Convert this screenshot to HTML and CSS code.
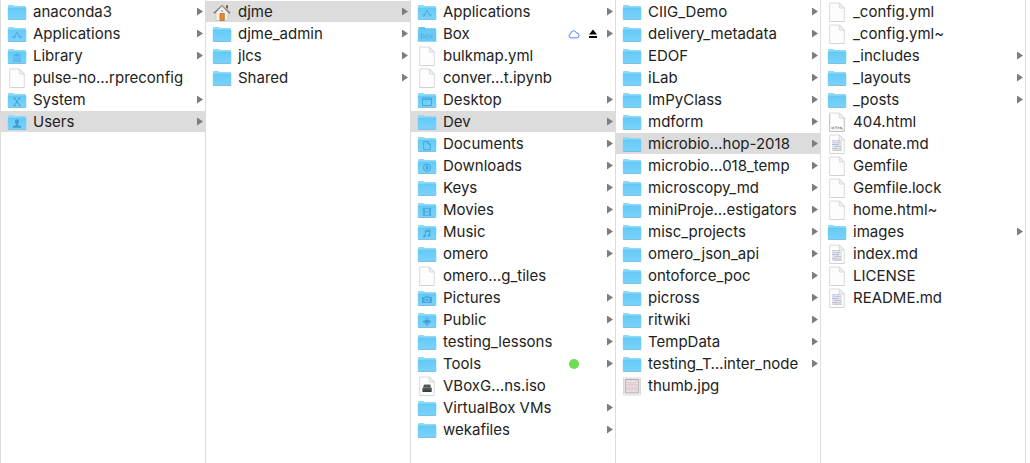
FILE: index.html
```html
<!DOCTYPE html>
<html lang="en">
<head>
<meta charset="utf-8">
<title>microbiology-workshop-2018</title>
<link rel="stylesheet" href="styles.css">
</head>
<body>
<svg class="sprite" aria-hidden="true">
  <defs>
    <linearGradient id="front" x1="0" y1="0" x2="0" y2="1">
      <stop offset="0" stop-color="#66caf8"/><stop offset="1" stop-color="#7ad2fb"/>
    </linearGradient>
    <linearGradient id="roof" x1="0" y1="0" x2="0" y2="1">
      <stop offset="0" stop-color="#a9a39c"/><stop offset="1" stop-color="#6f6a64"/>
    </linearGradient>
    <symbol id="folder" viewBox="0 0 20 20">
      <path d="M1 17.500V4q0-1 1-1h4.200q.6 0 1 .5l.6.6H18q1 0 1 1v12.400z" fill="#8cdaf7"/>
      <path d="M.8 6h18.500v10.700q0 .8-.8.800H1.600q-.8 0-.8-.8z" fill="url(#front)"/>
      <path d="M1 6h18" stroke="#5bbdea" stroke-width=".5"/>
      <path d="M1.200 17.500h17.700" stroke="#6bb3d5" stroke-width=".7"/>
    </symbol>
    <symbol id="file" viewBox="0 0 20 20">
      <path d="M2.700 1h9.800L17.300 6v13q0 .6-.6.600H3.200q-.6 0-.6-.6z" fill="#fdfdfd" stroke="#d2d2d2" stroke-width=".8"/>
      <path d="M12.300 1v4.400q0 .7.700.7h4.300z" fill="#f1f1f1" stroke="#cfcfcf" stroke-width=".7"/>
      <path d="M2.600 19.700h14.700" stroke="#c4c4c4" stroke-width=".6"/>
    </symbol>
    <symbol id="apps" viewBox="0 0 20 20"><use href="#folder"/>
      <path d="M6.700 14.800L10 8.200l3.300 6.600M5 12.800h4m3 0h3" fill="none" stroke="#4aace0" stroke-width="1"/>
    </symbol>
    <symbol id="library" viewBox="0 0 20 20"><use href="#folder"/>
      <path d="M5.500 9.700L10 7.500l4.500 2.200zM6 14.600h8v.9H6z" fill="#4aace0"/>
      <path d="M7 10.200v4m2-4v4m2-4v4m2-4v4" stroke="#4aace0" stroke-width=".8"/>
    </symbol>
    <symbol id="system" viewBox="0 0 20 20"><use href="#folder"/>
      <path d="M7.300 8l5.400 7.500M12.700 8l-5.400 7.500M6.400 8h2.200m3 0h2M6.400 15.500h2.200m3 0h2" fill="none" stroke="#3c9fd2" stroke-width="1"/>
    </symbol>
    <symbol id="users" viewBox="0 0 20 20"><use href="#folder"/>
      <path d="M10 7.300c2.800 0 2.600 3.400 1 4.700v1l3.300 1.200v1.500H5.700v-1.500L9 13v-1c-1.600-1.300-1.800-4.700 1-4.700z" fill="#3c9fd2"/>
    </symbol>
    <symbol id="box" viewBox="0 0 20 20">
      <path d="M1.500 3h6l1 1.300h10.300v13.200H1z" fill="#62c4f0"/>
      <path d="M.8 5.500h18.500v12H.8z" fill="#69c9f5"/>
      <g fill="none" stroke="#49b0e4" stroke-width=".8"><path d="M4.500 8.500v6"/><circle cx="6" cy="12.500" r="1.600"/><circle cx="10.200" cy="12.500" r="1.600"/><path d="M13 11l2.800 3.300m0-3.300L13 14.300"/></g>
    </symbol>
    <symbol id="desktop" viewBox="0 0 20 20"><use href="#folder"/>
      <path d="M5.500 8h9v7.500h-9zM5.500 9.300h9" fill="none" stroke="#3fa3d8" stroke-width=".9"/>
    </symbol>
    <symbol id="documents" viewBox="0 0 20 20"><use href="#folder"/>
      <path d="M6.700 7.500h4L13.300 10v5.700H6.700zM10.600 7.500V10h2.700" fill="none" stroke="#3fa3d8" stroke-width=".9"/>
    </symbol>
    <symbol id="downloads" viewBox="0 0 20 20"><use href="#folder"/>
      <circle cx="10" cy="11.700" r="3.600" fill="none" stroke="#3fa3d8" stroke-width="1"/>
      <path d="M9.200 9.500h1.600v2h1.400L10 14l-2.200-2.500h1.400z" fill="#3fa3d8"/>
    </symbol>
    <symbol id="movies" viewBox="0 0 20 20"><use href="#folder"/>
      <path d="M6.500 8v7.700M13.500 8v7.700" stroke="#3fa3d8" stroke-width="1.500" stroke-dasharray="1.200 .5"/>
      <path d="M7.500 8.400h5v6.900h-5zM7.500 11.800h5" fill="none" stroke="#3fa3d8" stroke-width=".8"/>
    </symbol>
    <symbol id="music" viewBox="0 0 20 20"><use href="#folder"/>
      <path d="M8.300 14V8.800l4.500-1v5.300M8.300 10l4.500-1" fill="none" stroke="#3c9fd2" stroke-width=".9"/>
      <ellipse cx="7.400" cy="14.300" rx="1.400" ry="1.100" fill="#3c9fd2"/><ellipse cx="11.900" cy="13.400" rx="1.400" ry="1.100" fill="#3c9fd2"/>
    </symbol>
    <symbol id="pictures" viewBox="0 0 20 20"><use href="#folder"/>
      <path fill-rule="evenodd" d="M5 9h2.500l.9-1.300h3.200l.9 1.300H15v6H5zM10 9.300a2.500 2.500 0 100 5 2.500 2.500 0 000-5z" fill="#49a9dc"/>
      <circle cx="10" cy="11.800" r="1.500" fill="#49a9dc"/>
    </symbol>
    <symbol id="public" viewBox="0 0 20 20"><use href="#folder"/>
      <path d="M10 7.400l1.900 1.900H8.100zM10 16l1.900-1.900H8.100zM5.700 11.700l1.900-1.900v3.800zM14.300 11.700l-1.900-1.900v3.800zM8 9.900h4v3.600H8z" fill="#429fd2"/>
    </symbol>
    <symbol id="home" viewBox="0 0 20 20">
      <path d="M14 3.200h2v4l-2-2z" fill="#8c5138"/>
      <path d="M4 10l6-6.500 6 6.500v8.500H4z" fill="#f1eee7" stroke="#c5bfb5" stroke-width=".5"/>
      <path d="M8 11.500h4.300v7H8z" fill="#e7892c" stroke="#9c5c22" stroke-width=".6"/>
      <path d="M9.200 8.300h1.700v1.500H9.200z" fill="#8b9fae"/>
      <path d="M2 11.300l8-7.800 8 7.800" fill="none" stroke="url(#roof)" stroke-width="1.600"/>
    </symbol>
    <symbol id="disk" viewBox="0 0 20 20"><use href="#file"/>
      <path d="M7 8.300h6.200l1.300 4H5.600z" fill="#9a9a9a"/><path d="M7.200 9h5.800l.8 2.500H6.400z" fill="#555"/>
      <rect x="5.400" y="12" width="9.300" height="4" rx=".6" fill="#3b4145"/><path d="M6 13h8" stroke="#718078" stroke-width=".7"/>
    </symbol>
    <symbol id="html" viewBox="0 0 20 20"><use href="#file"/>
      <path d="M2.600 2v17.400h14.700V6" fill="none" stroke="#b1b1b1" stroke-width=".6"/>
      <g fill="none" stroke="#777" stroke-width=".6"><path d="M5 14.700v2.600m1.800-2.600v2.600M5 16h1.800M7.800 14.900h2.400m-1.200 0v2.400M11 17.300v-2.400l1.200 1.400 1.200-1.400v2.400M14.500 14.700v2.400H16"/></g>
    </symbol>
    <symbol id="markdown" viewBox="0 0 20 20"><use href="#file"/>
      <path d="M5 6h10v11H5z" fill="#e5e6eb"/>
      <g fill="none" stroke-width="1"><path d="M5.500 6.600h3m1.500 0h3" stroke="#9ad3e8"/><path d="M5.500 8.600h2m1 0h5" stroke="#e3b3d2"/><path d="M5 10.600h7" stroke="#a3c2e4"/><path d="M7 12.500h7.500" stroke="#c6c6d3"/><path d="M5 14.400h6m1 0h2" stroke="#c8c1cd"/><path d="M6 16.200h8.500" stroke="#c0c1cc"/></g>
    </symbol>
    <symbol id="photo" viewBox="0 0 20 20">
      <path d="M1.600 2h16.800v17H1.600z" fill="#fff" stroke="#c9c9c9" stroke-width=".8"/>
      <path d="M3.200 3.500h13.600v13.500H3.200z" fill="#e9e2e2" stroke="#9a9a9a" stroke-width=".8"/>
      <path d="M5 5.500v9.500m2-9v8m3-8v9m2-9v8m3-8.500v9" stroke="#dfa9ca" stroke-width=".9" stroke-dasharray="1.400 1.100"/>
      <path d="M8.500 4v12.500m5-12.500v12.500M3.500 8.500h13m-13 4h13" stroke="#cec7c7" stroke-width=".4"/>
    </symbol>
    <symbol id="cloud" viewBox="0 0 12 12">
      <path d="M3 9.800Q1 9.600 1 7.800 1 6.300 2.700 6 2.900 2.800 5.500 2.800q2 0 2.700 2 2.800 0 2.800 2.800 0 2.200-2 2.200z" fill="#fff" stroke="#4a86f5" stroke-width="1"/>
    </symbol>
    <symbol id="eject" viewBox="0 0 10 10"><path d="M5 .5l4 5H1zM1 7h8v2H1z"/></symbol>
  </defs>
</svg>
<main class="browser">
  <ul class="column" aria-label="Macintosh HD">
    <li><a class="row folder" href="#"><svg class="icon"><use href="#folder"/></svg><span class="name">anaconda3</span></a></li>
    <li><a class="row folder" href="#"><svg class="icon"><use href="#apps"/></svg><span class="name">Applications</span></a></li>
    <li><a class="row folder" href="#"><svg class="icon"><use href="#library"/></svg><span class="name">Library</span></a></li>
    <li><a class="row" href="#"><svg class="icon"><use href="#file"/></svg><span class="name">pulse-no…rpreconfig</span></a></li>
    <li><a class="row folder" href="#"><svg class="icon"><use href="#system"/></svg><span class="name">System</span></a></li>
    <li><a class="row folder selected" href="#"><svg class="icon"><use href="#users"/></svg><span class="name">Users</span></a></li>
  </ul>
  <ul class="column" aria-label="Users">
    <li><a class="row folder selected" href="#"><svg class="icon"><use href="#home"/></svg><span class="name">djme</span></a></li>
    <li><a class="row folder" href="#"><svg class="icon"><use href="#folder"/></svg><span class="name">djme_admin</span></a></li>
    <li><a class="row folder" href="#"><svg class="icon"><use href="#folder"/></svg><span class="name">jlcs</span></a></li>
    <li><a class="row folder" href="#"><svg class="icon"><use href="#folder"/></svg><span class="name">Shared</span></a></li>
  </ul>
  <ul class="column" aria-label="djme">
    <li><a class="row folder" href="#"><svg class="icon"><use href="#apps"/></svg><span class="name">Applications</span></a></li>
    <li><a class="row folder" href="#"><svg class="icon"><use href="#box"/></svg><span class="name">Box</span><span class="status"><svg class="cloud"><use href="#cloud"/></svg><svg class="eject"><use href="#eject"/></svg></span></a></li>
    <li><a class="row" href="#"><svg class="icon"><use href="#file"/></svg><span class="name">bulkmap.yml</span></a></li>
    <li><a class="row" href="#"><svg class="icon"><use href="#file"/></svg><span class="name">conver…t.ipynb</span></a></li>
    <li><a class="row folder" href="#"><svg class="icon"><use href="#desktop"/></svg><span class="name">Desktop</span></a></li>
    <li><a class="row folder selected" href="#"><svg class="icon"><use href="#folder"/></svg><span class="name">Dev</span></a></li>
    <li><a class="row folder" href="#"><svg class="icon"><use href="#documents"/></svg><span class="name">Documents</span></a></li>
    <li><a class="row folder" href="#"><svg class="icon"><use href="#downloads"/></svg><span class="name">Downloads</span></a></li>
    <li><a class="row folder" href="#"><svg class="icon"><use href="#folder"/></svg><span class="name">Keys</span></a></li>
    <li><a class="row folder" href="#"><svg class="icon"><use href="#movies"/></svg><span class="name">Movies</span></a></li>
    <li><a class="row folder" href="#"><svg class="icon"><use href="#music"/></svg><span class="name">Music</span></a></li>
    <li><a class="row folder" href="#"><svg class="icon"><use href="#folder"/></svg><span class="name">omero</span></a></li>
    <li><a class="row" href="#"><svg class="icon"><use href="#file"/></svg><span class="name">omero…g_tiles</span></a></li>
    <li><a class="row folder" href="#"><svg class="icon"><use href="#pictures"/></svg><span class="name">Pictures</span></a></li>
    <li><a class="row folder" href="#"><svg class="icon"><use href="#public"/></svg><span class="name">Public</span></a></li>
    <li><a class="row folder" href="#"><svg class="icon"><use href="#folder"/></svg><span class="name">testing_lessons</span></a></li>
    <li><a class="row folder" href="#"><svg class="icon"><use href="#folder"/></svg><span class="name">Tools</span><span class="status"><i class="tag"></i></span></a></li>
    <li><a class="row" href="#"><svg class="icon"><use href="#disk"/></svg><span class="name">VBoxG…ns.iso</span></a></li>
    <li><a class="row folder" href="#"><svg class="icon"><use href="#folder"/></svg><span class="name">VirtualBox VMs</span></a></li>
    <li><a class="row folder" href="#"><svg class="icon"><use href="#folder"/></svg><span class="name">wekafiles</span></a></li>
  </ul>
  <ul class="column" aria-label="Dev">
    <li><a class="row folder" href="#"><svg class="icon"><use href="#folder"/></svg><span class="name">CIIG_Demo</span></a></li>
    <li><a class="row folder" href="#"><svg class="icon"><use href="#folder"/></svg><span class="name">delivery_metadata</span></a></li>
    <li><a class="row folder" href="#"><svg class="icon"><use href="#folder"/></svg><span class="name">EDOF</span></a></li>
    <li><a class="row folder" href="#"><svg class="icon"><use href="#folder"/></svg><span class="name">iLab</span></a></li>
    <li><a class="row folder" href="#"><svg class="icon"><use href="#folder"/></svg><span class="name">ImPyClass</span></a></li>
    <li><a class="row folder" href="#"><svg class="icon"><use href="#folder"/></svg><span class="name">mdform</span></a></li>
    <li><a class="row folder selected" href="#"><svg class="icon"><use href="#folder"/></svg><span class="name">microbio…hop-2018</span></a></li>
    <li><a class="row folder" href="#"><svg class="icon"><use href="#folder"/></svg><span class="name">microbio…018_temp</span></a></li>
    <li><a class="row folder" href="#"><svg class="icon"><use href="#folder"/></svg><span class="name">microscopy_md</span></a></li>
    <li><a class="row folder" href="#"><svg class="icon"><use href="#folder"/></svg><span class="name">miniProje…estigators</span></a></li>
    <li><a class="row folder" href="#"><svg class="icon"><use href="#folder"/></svg><span class="name">misc_projects</span></a></li>
    <li><a class="row folder" href="#"><svg class="icon"><use href="#folder"/></svg><span class="name">omero_json_api</span></a></li>
    <li><a class="row folder" href="#"><svg class="icon"><use href="#folder"/></svg><span class="name">ontoforce_poc</span></a></li>
    <li><a class="row folder" href="#"><svg class="icon"><use href="#folder"/></svg><span class="name">picross</span></a></li>
    <li><a class="row folder" href="#"><svg class="icon"><use href="#folder"/></svg><span class="name">ritwiki</span></a></li>
    <li><a class="row folder" href="#"><svg class="icon"><use href="#folder"/></svg><span class="name">TempData</span></a></li>
    <li><a class="row folder" href="#"><svg class="icon"><use href="#folder"/></svg><span class="name">testing_T…inter_node</span></a></li>
    <li><a class="row" href="#"><svg class="icon"><use href="#photo"/></svg><span class="name">thumb.jpg</span></a></li>
  </ul>
  <ul class="column" aria-label="microbiology-workshop-2018">
    <li><a class="row" href="#"><svg class="icon"><use href="#file"/></svg><span class="name">_config.yml</span></a></li>
    <li><a class="row" href="#"><svg class="icon"><use href="#file"/></svg><span class="name">_config.yml~</span></a></li>
    <li><a class="row folder" href="#"><svg class="icon"><use href="#folder"/></svg><span class="name">_includes</span></a></li>
    <li><a class="row folder" href="#"><svg class="icon"><use href="#folder"/></svg><span class="name">_layouts</span></a></li>
    <li><a class="row folder" href="#"><svg class="icon"><use href="#folder"/></svg><span class="name">_posts</span></a></li>
    <li><a class="row" href="#"><svg class="icon"><use href="#html"/></svg><span class="name">404.html</span></a></li>
    <li><a class="row" href="#"><svg class="icon"><use href="#markdown"/></svg><span class="name">donate.md</span></a></li>
    <li><a class="row" href="#"><svg class="icon"><use href="#file"/></svg><span class="name">Gemfile</span></a></li>
    <li><a class="row" href="#"><svg class="icon"><use href="#file"/></svg><span class="name">Gemfile.lock</span></a></li>
    <li><a class="row" href="#"><svg class="icon"><use href="#file"/></svg><span class="name">home.html~</span></a></li>
    <li><a class="row folder" href="#"><svg class="icon"><use href="#folder"/></svg><span class="name">images</span></a></li>
    <li><a class="row" href="#"><svg class="icon"><use href="#markdown"/></svg><span class="name">index.md</span></a></li>
    <li><a class="row" href="#"><svg class="icon"><use href="#file"/></svg><span class="name">LICENSE</span></a></li>
    <li><a class="row" href="#"><svg class="icon"><use href="#markdown"/></svg><span class="name">README.md</span></a></li>
  </ul>
  <div class="column"></div>
</main>
</body>
</html>
```
FILE: styles.css
```css
* { box-sizing: border-box; }

body {
  margin: 0;
  background: #fff;
  color: #222;
  font: 15px/21px Inter, Roboto, "Liberation Sans", sans-serif;
}

.sprite {
  position: absolute;
  width: 0;
  height: 0;
}

.browser {
  display: grid;
  grid-template-columns: repeat(5, minmax(0, 1fr)) 5px;
  min-height: 100vh;
}

.column {
  display: flex;
  flex-direction: column;
  gap: 1px;
  margin: 0;
  padding: 1px 0 0;
  border-left: 1px solid #dcdcdc;
  list-style: none;
}

.row {
  display: flex;
  align-items: center;
  height: 21px;
  padding: 0 12px 0 6px;
  color: inherit;
  text-decoration: none;
}

.row.folder { padding-right: 2px; }

.row.selected { background: #dcdcdc; }

.icon {
  flex: none;
  width: 20px;
  height: 20px;
  margin-right: 6px;
}

.name {
  flex: 1;
  min-width: 0;
  white-space: nowrap;
}

.folder::after {
  content: "";
  width: 6px;
  height: 8px;
  background: #7d7d7d;
  clip-path: polygon(0 0, 100% 50%, 0 100%);
}

.status {
  display: flex;
  align-items: center;
  gap: 8px;
  width: 39px;
}

.cloud {
  width: 12px;
  height: 12px;
}

.eject {
  width: 10px;
  height: 10px;
}

.tag {
  width: 10px;
  height: 10px;
  margin-left: 1px;
  border-radius: 50%;
  background: #6fdc55;
}
```
